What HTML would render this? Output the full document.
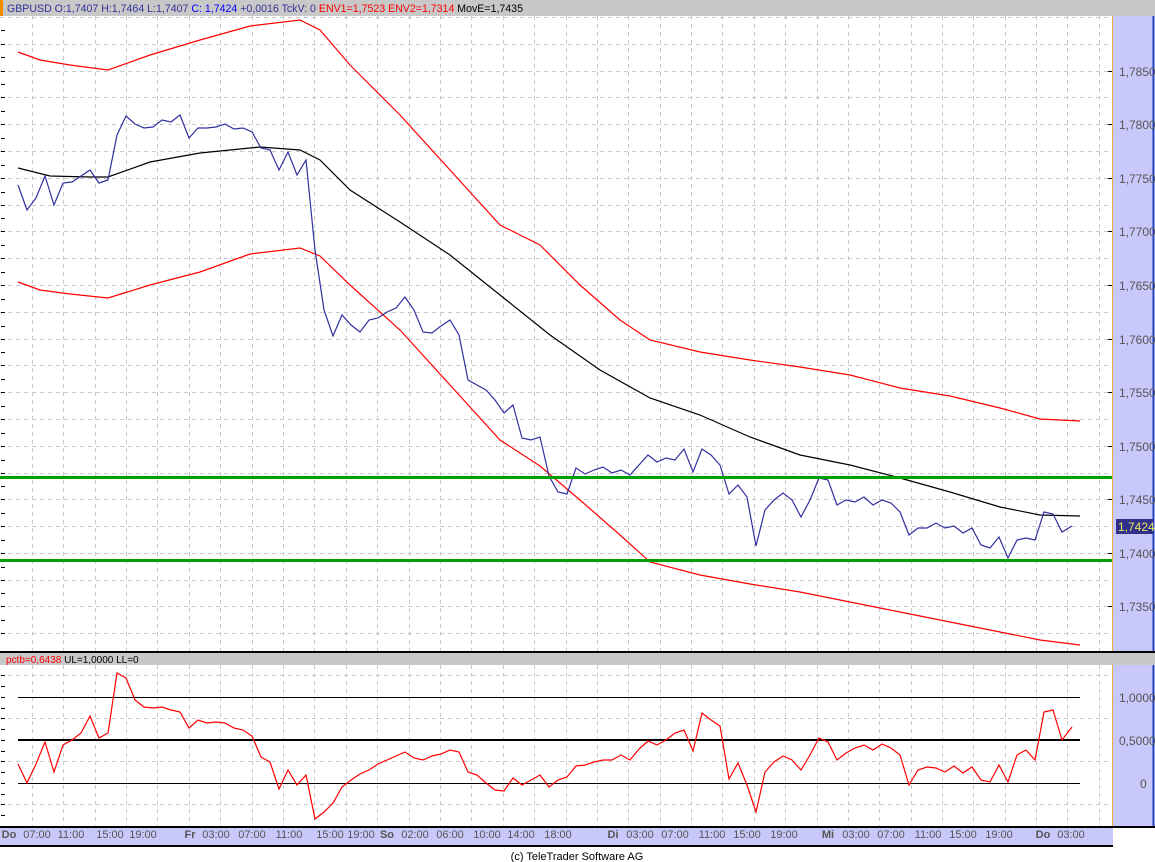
<html><head><style>body{margin:0;width:1155px;height:862px;background:#fff;overflow:hidden;font-family:"Liberation Sans",sans-serif}</style></head><body>
<svg width="1155" height="862" xmlns="http://www.w3.org/2000/svg" font-family="Liberation Sans, sans-serif">
<rect x="0" y="0" width="1155" height="16" fill="#c8c8c8"/>
<rect x="0" y="0" width="3" height="16" fill="#f08c00"/>
<text x="7" y="12" font-size="10.6" fill="#333399">GBPUSD O:1,7407 H:1,7464 L:1,7407 <tspan fill="#0000ff">C: 1,7424</tspan> +0,0016 TckV: 0 <tspan fill="#ff0000">ENV1=1,7523 ENV2=1,7314</tspan> <tspan fill="#000">MovE=1,7435</tspan></text>
<rect x="1113" y="16" width="41" height="635" fill="#c8c8fa"/>
<rect x="1113" y="665" width="41" height="161" fill="#c8c8fa"/>
<line x1="1153.5" y1="16" x2="1153.5" y2="651" stroke="#2040c0" stroke-width="2"/>
<line x1="1153.5" y1="665" x2="1153.5" y2="826" stroke="#2040c0" stroke-width="2"/>
<line x1="1112.5" y1="16" x2="1112.5" y2="826" stroke="#e8b040" stroke-width="1"/>
<g stroke="#c8c8c8" stroke-dasharray="4,4" stroke-width="1">
<path d="M32.5 16V651M63.5 16V651M95.5 16V651M126.5 16V651M157.5 16V651M189.5 16V651M220.5 16V651M252.5 16V651M283.5 16V651M314.5 16V651M346.5 16V651M377.5 16V651M409.5 16V651M440.5 16V651M471.5 16V651M503.5 16V651M534.5 16V651M566.5 16V651M597.5 16V651M628.5 16V651M660.5 16V651M691.5 16V651M722.5 16V651M754.5 16V651M785.5 16V651M817.5 16V651M848.5 16V651M879.5 16V651M911.5 16V651M942.5 16V651M973.5 16V651M1005.5 16V651M1036.5 16V651M1067.5 16V651M1099.5 16V651"/>
<path d="M32.5 665V826M63.5 665V826M95.5 665V826M126.5 665V826M157.5 665V826M189.5 665V826M220.5 665V826M252.5 665V826M283.5 665V826M314.5 665V826M346.5 665V826M377.5 665V826M409.5 665V826M440.5 665V826M471.5 665V826M503.5 665V826M534.5 665V826M566.5 665V826M597.5 665V826M628.5 665V826M660.5 665V826M691.5 665V826M722.5 665V826M754.5 665V826M785.5 665V826M817.5 665V826M848.5 665V826M879.5 665V826M911.5 665V826M942.5 665V826M973.5 665V826M1005.5 665V826M1036.5 665V826M1067.5 665V826M1099.5 665V826"/>
<path d="M0 17.5H1112M0 44.5H1112M0 71.5H1112M0 97.5H1112M0 124.5H1112M0 151.5H1112M0 178.5H1112M0 205.5H1112M0 231.5H1112M0 258.5H1112M0 285.5H1112M0 312.5H1112M0 339.5H1112M0 365.5H1112M0 392.5H1112M0 419.5H1112M0 446.5H1112M0 473.5H1112M0 499.5H1112M0 526.5H1112M0 553.5H1112M0 580.5H1112M0 606.5H1112M0 633.5H1112"/>
<path d="M0 675.5H1112M0 718.5H1112M0 761.5H1112M0 804.5H1112"/>
</g>
<g stroke="#000" stroke-width="1">
<path d="M1108 71.5h4M1108 124.5h4M1108 178.5h4M1108 231.5h4M1108 285.5h4M1108 339.5h4M1108 392.5h4M1108 446.5h4M1108 499.5h4M1108 553.5h4M1108 606.5h4"/>
<path d="M1 30.5h4M1 44.5h4M1 57.5h4M1 71.5h4M1 84.5h4M1 97.5h4M1 111.5h4M1 124.5h4M1 138.5h4M1 151.5h4M1 165.5h4M1 178.5h4M1 192.5h4M1 205.5h4M1 218.5h4M1 231.5h4M1 245.5h4M1 258.5h4M1 272.5h4M1 285.5h4M1 299.5h4M1 312.5h4M1 326.5h4M1 339.5h4M1 352.5h4M1 365.5h4M1 379.5h4M1 392.5h4M1 406.5h4M1 419.5h4M1 433.5h4M1 446.5h4M1 460.5h4M1 473.5h4M1 486.5h4M1 499.5h4M1 513.5h4M1 526.5h4M1 540.5h4M1 553.5h4M1 567.5h4M1 580.5h4M1 593.5h4M1 606.5h4M1 620.5h4M1 633.5h4"/>
<path d="M1 675.5h4M1 686.5h4M1 697.5h4M1 708.5h4M1 718.5h4M1 729.5h4M1 740.5h4M1 751.5h4M1 761.5h4M1 772.5h4M1 783.5h4M1 794.5h4M1 804.5h4M1 815.5h4"/>
</g>
<g font-size="12" fill="#555">
<text x="1119" y="76">1,7850</text><text x="1119" y="129">1,7800</text><text x="1119" y="183">1,7750</text><text x="1119" y="236">1,7700</text><text x="1119" y="290">1,7650</text><text x="1119" y="344">1,7600</text><text x="1119" y="397">1,7550</text><text x="1119" y="451">1,7500</text><text x="1119" y="504">1,7450</text><text x="1119" y="558">1,7400</text><text x="1119" y="611">1,7350</text>
<text x="1119" y="702">1,0000</text><text x="1119" y="745">0,5000</text><text x="1140" y="788">0</text>
</g>
<rect x="1116" y="519" width="37" height="15" fill="#303088"/>
<text x="1118" y="531" font-size="12" fill="#e8e860">1,7424</text>
<g fill="none" stroke-width="1.2">
<polyline stroke="#f00" points="18,52 40,60 70,65 108,70 150,55 200,40 250,26 300,20 320,30 350,65 400,115 450,170 500,225 540,245 580,285 620,320 650,340 700,352 750,360 800,367 850,375 900,388 950,396 1000,408 1040,419 1080,421"/>
<polyline stroke="#f00" points="18,282 40,290 70,294 108,298 150,285 200,272 250,254 300,248 320,256 350,285 400,330 450,385 500,440 540,466 580,500 620,535 650,562 700,575 750,584 800,592 850,602 900,612 950,622 1000,632 1040,640 1080,645"/>
<polyline stroke="#000" points="18,168 50,176 90,177 108,177 150,162 200,153 260,147 300,150 320,160 350,190 400,222 450,255 500,295 550,335 600,370 650,398 700,415 750,437 800,455 850,465 900,478 950,492 1000,507 1040,515 1080,516"/>
<polyline stroke="#3030a0" points="18,185 27,210 36,198 45,176 54,205 63,183 72,182 81,176 90,170 99,183 108,180 117,135 126,116 135,124 144,128 153,127 162,120 171,122 180,115 189,138 198,128 207,128 216,127 225,124 234,129 243,128 252,132 261,148 270,150 279,170 288,152 297,175 306,160 315,250 324,310 333,336 342,315 351,325 360,332 369,320 378,318 387,312 396,308 405,297 414,310 423,332 432,333 441,326 450,320 459,335 468,380 477,385 486,390 495,400 504,413 513,405 522,438 531,440 540,437 549,476 558,492 567,494 576,468 585,474 594,470 603,467 612,473 621,470 630,475 639,465 648,455 657,462 666,458 675,460 684,449 693,472 702,449 711,455 720,465 729,494 738,485 747,497 756,546 765,510 774,500 783,493 792,500 801,517 810,500 819,478 828,480 837,505 846,500 855,502 864,497 873,505 882,500 891,503 900,512 909,535 918,528 927,528 936,523 945,528 954,526 963,533 972,528 981,545 990,548 999,537 1008,558 1017,540 1026,538 1035,540 1044,512 1053,514 1062,532 1072,526"/>
</g>
<rect x="0" y="476" width="1112" height="3" fill="#00a000"/>
<rect x="0" y="559" width="1112" height="3" fill="#00a000"/>
<rect x="0" y="651" width="1155" height="2" fill="#000"/>
<rect x="0" y="653" width="1155" height="12" fill="#c8c8c8"/>
<text x="6" y="663" font-size="10" fill="#000"><tspan fill="#f00">pctb=0,6438</tspan> UL=1,0000 LL=0</text>
<line x1="18" y1="697.5" x2="1080" y2="697.5" stroke="#000"/>
<line x1="18" y1="740" x2="1080" y2="740" stroke="#000" stroke-width="2"/>
<line x1="18" y1="783.5" x2="1080" y2="783.5" stroke="#000"/>
<polyline fill="none" stroke="#f00" stroke-width="1.2" points="18,764 27,783 36,764 45,742 54,772 63,745 72,740 81,733 90,716 99,738 108,733 117,673 126,678 135,700 144,707 153,708 162,707 171,710 180,712 189,728 198,720 207,723 216,722 225,723 234,728 243,730 252,736 261,757 270,762 279,789 288,770 297,785 306,775 315,819 324,812 333,803 342,787 351,780 360,774 369,770 378,764 387,760 396,756 405,752 414,758 423,760 432,756 441,754 450,750 459,752 468,772 477,775 486,783 495,790 504,791 513,778 522,785 531,780 540,775 549,787 558,780 567,777 576,766 585,765 594,762 603,760 612,760 621,755 630,760 639,749 648,741 657,745 666,740 675,733 684,730 693,751 702,713 711,720 720,726 729,779 738,763 747,785 756,812 765,772 774,762 783,756 792,760 801,770 810,755 819,738 828,742 837,760 846,753 855,748 864,745 873,750 882,744 891,748 900,755 909,785 918,770 927,767 936,768 945,772 954,766 963,773 972,767 981,780 990,782 999,765 1008,782 1017,755 1026,750 1035,760 1044,712 1053,710 1062,740 1072,727"/>
<rect x="0" y="826" width="1155" height="2" fill="#000"/>
<rect x="0" y="828" width="1113" height="17" fill="#c8c8fa"/>
<rect x="0" y="845" width="1113" height="2" fill="#000"/>
<g font-size="11" fill="#555" text-anchor="middle">
<text x="9" y="838" font-weight="bold">Do</text><text x="37" y="838">07:00</text><text x="71" y="838">11:00</text><text x="110" y="838">15:00</text><text x="143" y="838">19:00</text>
<text x="190" y="838" font-weight="bold">Fr</text><text x="216" y="838">03:00</text><text x="252" y="838">07:00</text><text x="289" y="838">11:00</text><text x="330" y="838">15:00</text><text x="361" y="838">19:00</text>
<text x="387" y="838" font-weight="bold">So</text><text x="415" y="838">02:00</text><text x="450" y="838">06:00</text><text x="487" y="838">10:00</text><text x="521" y="838">14:00</text><text x="558" y="838">18:00</text>
<text x="613" y="838" font-weight="bold">Di</text><text x="640" y="838">03:00</text><text x="675" y="838">07:00</text><text x="712" y="838">11:00</text><text x="747" y="838">15:00</text><text x="784" y="838">19:00</text>
<text x="828" y="838" font-weight="bold">Mi</text><text x="856" y="838">03:00</text><text x="891" y="838">07:00</text><text x="928" y="838">11:00</text><text x="963" y="838">15:00</text><text x="999" y="838">19:00</text>
<text x="1043" y="838" font-weight="bold">Do</text><text x="1071" y="838">03:00</text>
</g>
<text x="577" y="860" font-size="11" fill="#000" text-anchor="middle">(c) TeleTrader Software AG</text>
</svg>
</body></html>
